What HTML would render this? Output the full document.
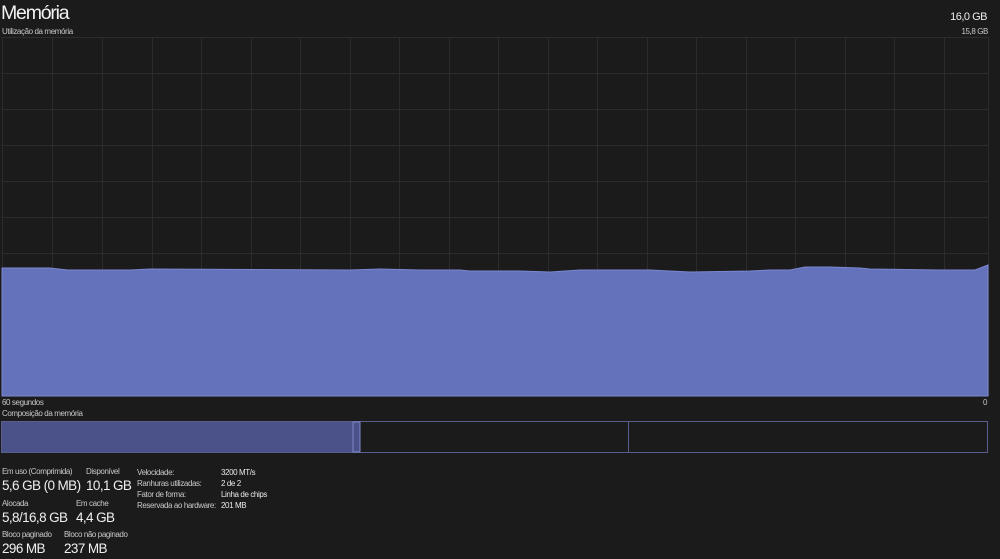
<!DOCTYPE html>
<html><head><meta charset="utf-8"><style>
body{margin:0;width:1000px;height:559px;background:#1b1b1b;overflow:hidden;font-family:"Liberation Sans",sans-serif;color:#e8e8e8;position:relative}
.a{position:absolute;white-space:nowrap}
.s{font-size:8px;color:#c8c8c8;letter-spacing:-0.4px}
.b{font-size:13.5px;color:#f0f0f0;letter-spacing:-0.6px}
</style></head><body>
<div class="a" style="left:1px;top:2px;font-size:19.5px;letter-spacing:-1.2px;color:#f2f2f2">Memória</div>
<div class="a s" style="left:2px;top:27px">Utilização da memória</div>
<div class="a" style="right:13px;top:11px;font-size:11px;letter-spacing:-0.5px;color:#eee">16,0 GB</div>
<div class="a s" style="right:12px;top:27px">15,8 GB</div>
<svg class="a" style="left:0;top:0" width="1000" height="559">
<g stroke="#2c2c2c" stroke-width="1">
<path d="M1.5 37.5H988.5M1.5 73.5H988.5M1.5 109.5H988.5M1.5 145.5H988.5M1.5 181.5H988.5M1.5 217.5H988.5M1.5 253.5H988.5M1.5 289.5H988.5M1.5 325.5H988.5M1.5 361.5H988.5"/>
<path d="M2.5 37V396M52.5 37V396M102.5 37V396M152.5 37V396M201.5 37V396M251.5 37V396M300.5 37V396M350.5 37V396M399.5 37V396M449.5 37V396M498.5 37V396M548.5 37V396M597.5 37V396M647.5 37V396M696.5 37V396M746.5 37V396M795.5 37V396M845.5 37V396M894.5 37V396M944.5 37V396M988.5 37V396"/>
</g>
<path d="M2 268L50 268L68 270L130 270L150 269L350 270L380 269L420 270L460 270L470 271L520 271L550 272L580 270L650 270L690 272L750 271L770 270L790 270L805 267L830 267L860 268L870 269L940 270L975 270L988 265L988 396L2 396Z" fill="#6472bb" stroke="#7b88d0" stroke-width="1"/>
<rect x="1.5" y="421.5" width="986" height="31" fill="none" stroke="#5a5e8c"/>
<rect x="2" y="422" width="351" height="30" fill="#4b5289"/>
<rect x="353" y="422" width="7" height="30" fill="#4b5289" stroke="#7e88cc" stroke-width="1"/>
<path d="M628.5 422V452" stroke="#5a5e8c"/>
</svg>
<div class="a s" style="left:2px;top:398px">60 segundos</div>
<div class="a s" style="right:13px;top:398px">0</div>
<div class="a s" style="left:2px;top:409px">Composição da memória</div>
<div class="a s" style="left:2px;top:467px">Em uso (Comprimida)</div>
<div class="a b" style="left:2px;top:478px">5,6 GB (0 MB)</div>
<div class="a s" style="left:86px;top:467px">Disponível</div>
<div class="a b" style="left:86px;top:478px">10,1 GB</div>
<div class="a s" style="left:2px;top:499px">Alocada</div>
<div class="a b" style="left:2px;top:510px">5,8/16,8 GB</div>
<div class="a s" style="left:76px;top:499px">Em cache</div>
<div class="a b" style="left:76px;top:510px">4,4 GB</div>
<div class="a s" style="left:2px;top:530px">Bloco paginado</div>
<div class="a b" style="left:2px;top:541px">296 MB</div>
<div class="a s" style="left:64px;top:530px">Bloco não paginado</div>
<div class="a b" style="left:64px;top:541px">237 MB</div>
<div class="a s" style="left:137px;top:467px;line-height:11px">Velocidade:<br>Ranhuras utilizadas:<br>Fator de forma:<br>Reservada ao hardware:</div>
<div class="a s" style="left:221px;top:467px;line-height:11px;color:#e8e8e8">3200 MT/s<br>2 de 2<br>Linha de chips<br>201 MB</div>
</body></html>
